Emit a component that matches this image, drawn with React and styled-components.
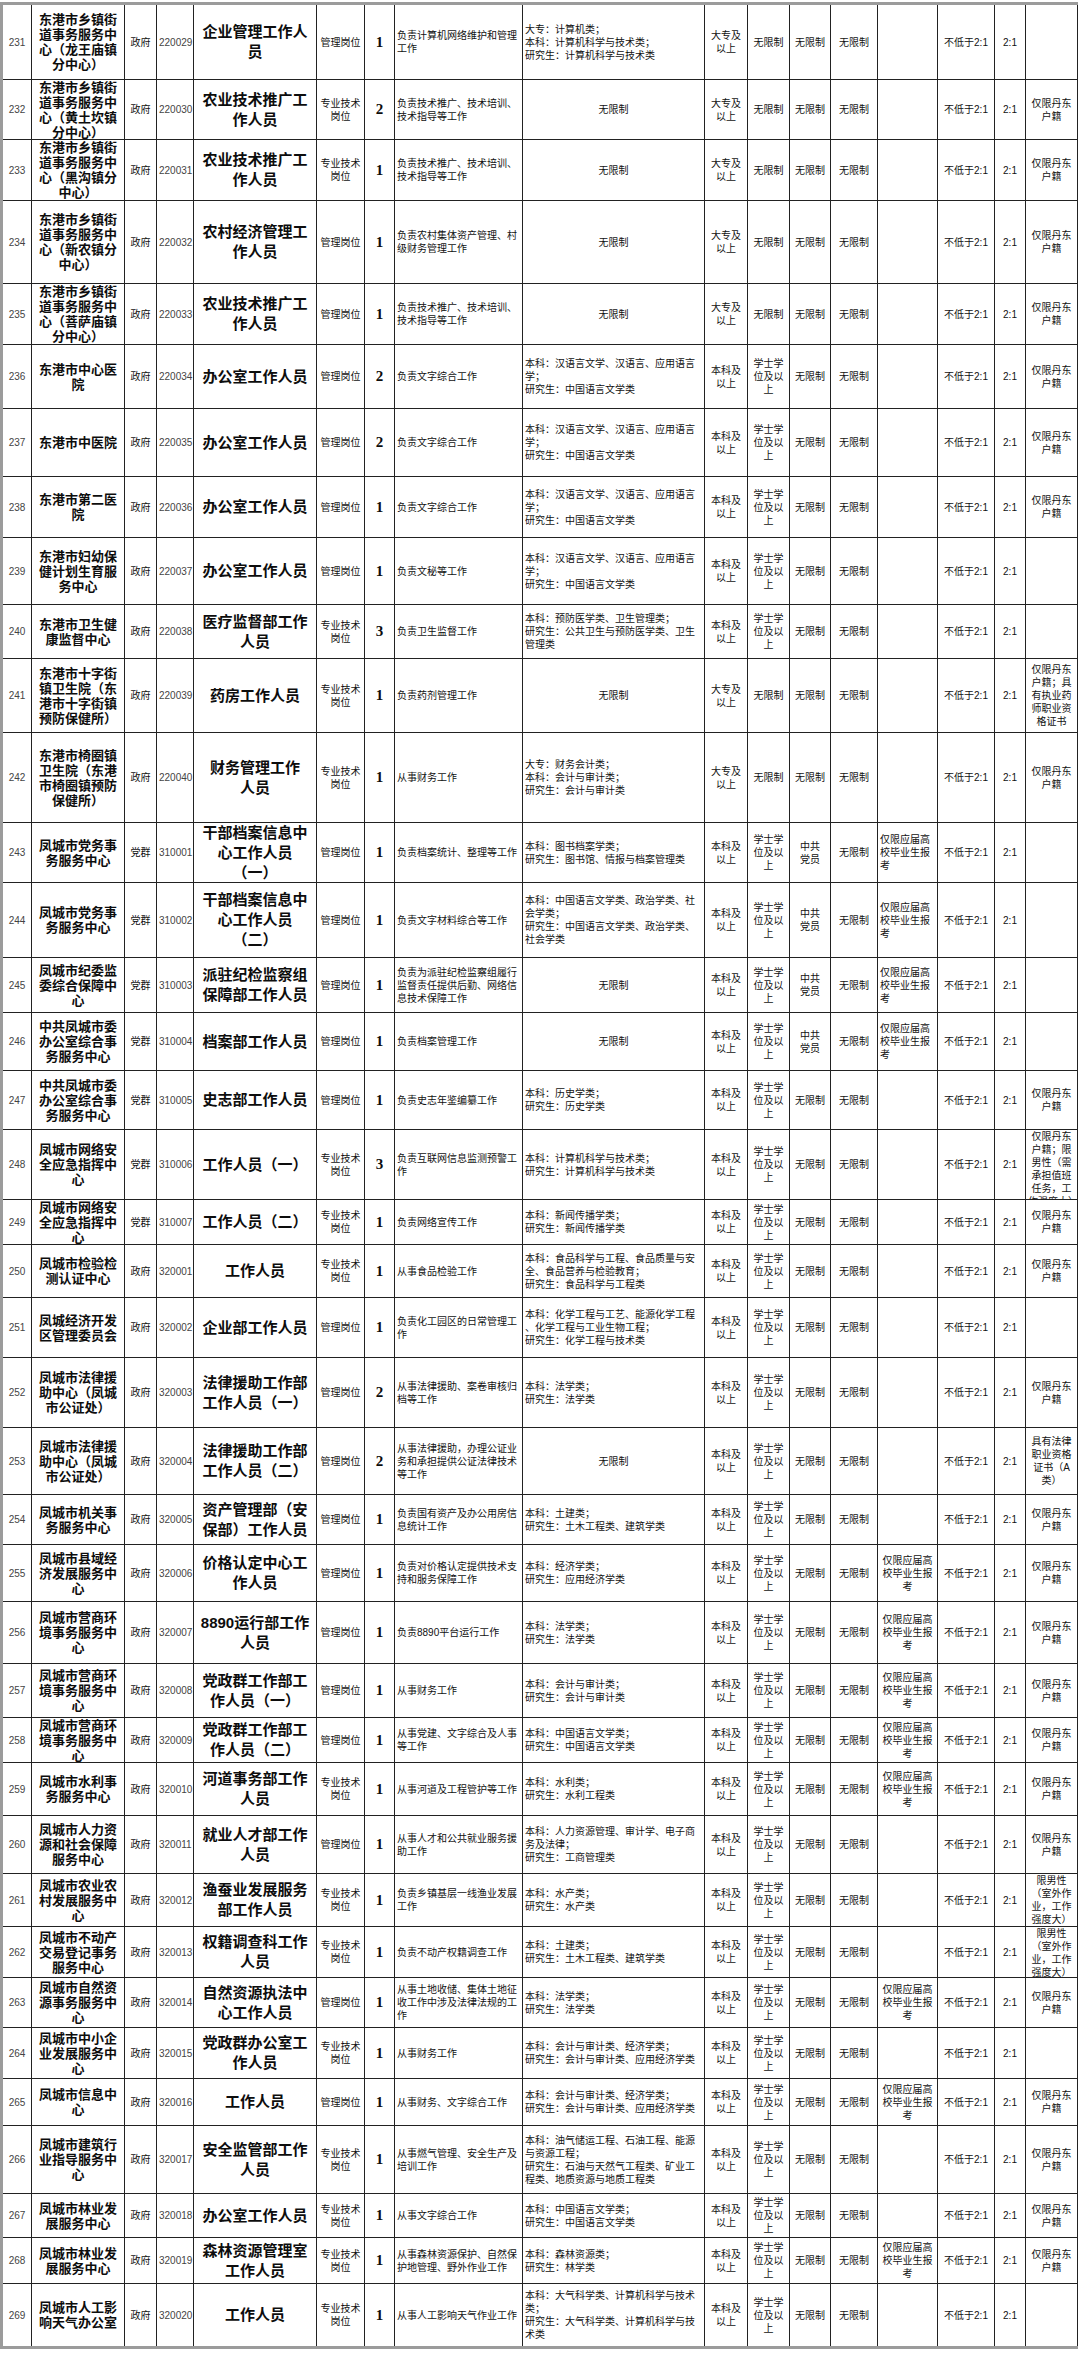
import React from 'react';
import styled, {createGlobalStyle} from 'styled-components';

// column widths incl. right border (px)
const COLS = [29, 93, 32, 37, 123, 48, 30, 128, 182, 43, 42, 41, 47, 60, 57, 31, 52];

const JK = ['仅限丹东', '户籍'];
const XS = ['学士学', '位及以', '上'];
const BK = ['本科及', '以上'];
const DZ = ['大专及', '以上'];
const GL = ['管理岗位'];
const ZJ = ['专业技术', '岗位'];
const YJ = ['仅限应届高', '校毕业生报', '考'];
const NO = ['无限制'];
const DY = ['中共', '党员'];

const dz = {edu: DZ, deg: NO};

const ROWS = [
  {n: 231, h: 75, ...dz, unit: ['东港市乡镇街', '道事务服务中', '心（龙王庙镇', '分中心）'], code: '220029', pos: ['企业管理工作人', '员'], duty: ['负责计算机网络维护和管理', '工作'], major: ['大专：计算机类；', '本科：计算机科学与技术类；', '研究生：计算机科学与技术类']},
  {n: 232, h: 60, ...dz, unit: ['东港市乡镇街', '道事务服务中', '心（黄土坎镇', '分中心）'], code: '220030', pos: ['农业技术推广工', '作人员'], type: ZJ, cnt: 2, duty: ['负责技术推广、技术培训、', '技术指导等工作'], remark: JK},
  {n: 233, h: 61, ...dz, unit: ['东港市乡镇街', '道事务服务中', '心（黑沟镇分', '中心）'], code: '220031', pos: ['农业技术推广工', '作人员'], type: ZJ, duty: ['负责技术推广、技术培训、', '技术指导等工作'], remark: JK},
  {n: 234, h: 83, ...dz, unit: ['东港市乡镇街', '道事务服务中', '心（新农镇分', '中心）'], code: '220032', pos: ['农村经济管理工', '作人员'], duty: ['负责农村集体资产管理、村', '级财务管理工作'], remark: JK},
  {n: 235, h: 61, ...dz, unit: ['东港市乡镇街', '道事务服务中', '心（菩萨庙镇', '分中心）'], code: '220033', pos: ['农业技术推广工', '作人员'], duty: ['负责技术推广、技术培训、', '技术指导等工作'], remark: JK},
  {n: 236, h: 64, unit: ['东港市中心医', '院'], code: '220034', pos: ['办公室工作人员'], cnt: 2, duty: ['负责文字综合工作'], major: ['本科：汉语言文学、汉语言、应用语言', '学；', '研究生：中国语言文学类'], remark: JK},
  {n: 237, h: 68, unit: ['东港市中医院'], code: '220035', pos: ['办公室工作人员'], cnt: 2, duty: ['负责文字综合工作'], major: ['本科：汉语言文学、汉语言、应用语言', '学；', '研究生：中国语言文学类'], remark: JK},
  {n: 238, h: 61, unit: ['东港市第二医', '院'], code: '220036', pos: ['办公室工作人员'], duty: ['负责文字综合工作'], major: ['本科：汉语言文学、汉语言、应用语言', '学；', '研究生：中国语言文学类'], remark: JK},
  {n: 239, h: 67, unit: ['东港市妇幼保', '健计划生育服', '务中心'], code: '220037', pos: ['办公室工作人员'], duty: ['负责文秘等工作'], major: ['本科：汉语言文学、汉语言、应用语言', '学；', '研究生：中国语言文学类']},
  {n: 240, h: 54, unit: ['东港市卫生健', '康监督中心'], code: '220038', pos: ['医疗监督部工作', '人员'], type: ZJ, cnt: 3, duty: ['负责卫生监督工作'], major: ['本科：预防医学类、卫生管理类；', '研究生：公共卫生与预防医学类、卫生', '管理类']},
  {n: 241, h: 74, ...dz, unit: ['东港市十字街', '镇卫生院（东', '港市十字街镇', '预防保健所）'], code: '220039', pos: ['药房工作人员'], type: ZJ, duty: ['负责药剂管理工作'], remark: ['仅限丹东', '户籍；具', '有执业药', '师职业资', '格证书']},
  {n: 242, h: 90, ...dz, unit: ['东港市椅圈镇', '卫生院（东港', '市椅圈镇预防', '保健所）'], code: '220040', pos: ['财务管理工作', '人员'], type: ZJ, duty: ['从事财务工作'], major: ['大专：财务会计类；', '本科：会计与审计类；', '研究生：会计与审计类'], remark: JK},
  {n: 243, h: 60, cat: '党群', pol: DY, c14: YJ, c14Left: true, unit: ['凤城市党务事', '务服务中心'], code: '310001', pos: ['干部档案信息中', '心工作人员', '（一）'], duty: ['负责档案统计、整理等工作'], major: ['本科：图书档案学类；', '研究生：图书馆、情报与档案管理类']},
  {n: 244, h: 75, cat: '党群', pol: DY, c14: YJ, c14Left: true, unit: ['凤城市党务事', '务服务中心'], code: '310002', pos: ['干部档案信息中', '心工作人员', '（二）'], duty: ['负责文字材料综合等工作'], major: ['本科：中国语言文学类、政治学类、社', '会学类；', '研究生：中国语言文学类、政治学类、', '社会学类']},
  {n: 245, h: 55, cat: '党群', pol: DY, c14: YJ, c14Left: true, unit: ['凤城市纪委监', '委综合保障中', '心'], code: '310003', pos: ['派驻纪检监察组', '保障部工作人员'], duty: ['负责为派驻纪检监察组履行', '监督责任提供后勤、网络信', '息技术保障工作']},
  {n: 246, h: 58, cat: '党群', pol: DY, c14: YJ, c14Left: true, unit: ['中共凤城市委', '办公室综合事', '务服务中心'], code: '310004', pos: ['档案部工作人员'], duty: ['负责档案管理工作']},
  {n: 247, h: 59, cat: '党群', unit: ['中共凤城市委', '办公室综合事', '务服务中心'], code: '310005', pos: ['史志部工作人员'], duty: ['负责史志年鉴编纂工作'], major: ['本科：历史学类；', '研究生：历史学类'], remark: JK},
  {n: 248, h: 70, cat: '党群', unit: ['凤城市网络安', '全应急指挥中', '心'], code: '310006', pos: ['工作人员（一）'], type: ZJ, cnt: 3, duty: ['负责互联网信息监测预警工', '作'], major: ['本科：计算机科学与技术类；', '研究生：计算机科学与技术类'], remark: ['仅限丹东', '户籍；限', '男性（需', '承担值班', '任务，工', '作强度大）']},
  {n: 249, h: 45, cat: '党群', unit: ['凤城市网络安', '全应急指挥中', '心'], code: '310007', pos: ['工作人员（二）'], type: ZJ, duty: ['负责网络宣传工作'], major: ['本科：新闻传播学类；', '研究生：新闻传播学类'], remark: JK},
  {n: 250, h: 53, unit: ['凤城市检验检', '测认证中心'], code: '320001', pos: ['工作人员'], type: ZJ, duty: ['从事食品检验工作'], major: ['本科：食品科学与工程、食品质量与安', '全、食品营养与检验教育；', '研究生：食品科学与工程类'], remark: JK},
  {n: 251, h: 60, unit: ['凤城经济开发', '区管理委员会'], code: '320002', pos: ['企业部工作人员'], duty: ['负责化工园区的日常管理工', '作'], major: ['本科：化学工程与工艺、能源化学工程', '、化学工程与工业生物工程；', '研究生：化学工程与技术类']},
  {n: 252, h: 70, unit: ['凤城市法律援', '助中心（凤城', '市公证处）'], code: '320003', pos: ['法律援助工作部', '工作人员（一）'], cnt: 2, duty: ['从事法律援助、案卷审核归', '档等工作'], major: ['本科：法学类；', '研究生：法学类'], remark: JK},
  {n: 253, h: 67, unit: ['凤城市法律援', '助中心（凤城', '市公证处）'], code: '320004', pos: ['法律援助工作部', '工作人员（二）'], cnt: 2, duty: ['从事法律援助，办理公证业', '务和承担提供公证法律技术', '等工作'], remark: ['具有法律', '职业资格', '证书（A', '类）']},
  {n: 254, h: 50, unit: ['凤城市机关事', '务服务中心'], code: '320005', pos: ['资产管理部（安', '保部）工作人员'], duty: ['负责国有资产及办公用房信', '息统计工作'], major: ['本科：土建类；', '研究生：土木工程类、建筑学类'], remark: JK},
  {n: 255, h: 57, c14: YJ, unit: ['凤城市县域经', '济发展服务中', '心'], code: '320006', pos: ['价格认定中心工', '作人员'], duty: ['负责对价格认定提供技术支', '持和服务保障工作'], major: ['本科：经济学类；', '研究生：应用经济学类'], remark: JK},
  {n: 256, h: 62, c14: YJ, unit: ['凤城市营商环', '境事务服务中', '心'], code: '320007', pos: ['8890运行部工作', '人员'], duty: ['负责8890平台运行工作'], major: ['本科：法学类；', '研究生：法学类'], remark: JK},
  {n: 257, h: 54, c14: YJ, unit: ['凤城市营商环', '境事务服务中', '心'], code: '320008', pos: ['党政群工作部工', '作人员（一）'], duty: ['从事财务工作'], major: ['本科：会计与审计类；', '研究生：会计与审计类'], remark: JK},
  {n: 258, h: 45, c14: YJ, unit: ['凤城市营商环', '境事务服务中', '心'], code: '320009', pos: ['党政群工作部工', '作人员（二）'], duty: ['从事党建、文字综合及人事', '等工作'], major: ['本科：中国语言文学类；', '研究生：中国语言文学类'], remark: JK},
  {n: 259, h: 53, c14: YJ, unit: ['凤城市水利事', '务服务中心'], code: '320010', pos: ['河道事务部工作', '人员'], type: ZJ, duty: ['从事河道及工程管护等工作'], major: ['本科：水利类；', '研究生：水利工程类'], remark: JK},
  {n: 260, h: 58, unit: ['凤城市人力资', '源和社会保障', '服务中心'], code: '320011', pos: ['就业人才部工作', '人员'], duty: ['从事人才和公共就业服务援', '助工作'], major: ['本科：人力资源管理、审计学、电子商', '务及法律；', '研究生：工商管理类'], remark: JK},
  {n: 261, h: 53, unit: ['凤城市农业农', '村发展服务中', '心'], code: '320012', pos: ['渔蚕业发展服务', '部工作人员'], type: ZJ, duty: ['负责乡镇基层一线渔业发展', '工作'], major: ['本科：水产类；', '研究生：水产类'], remark: ['限男性', '（室外作', '业，工作', '强度大）']},
  {n: 262, h: 51, unit: ['凤城市不动产', '交易登记事务', '服务中心'], code: '320013', pos: ['权籍调查科工作', '人员'], type: ZJ, duty: ['负责不动产权籍调查工作'], major: ['本科：土建类；', '研究生：土木工程类、建筑学类'], remark: ['限男性', '（室外作', '业，工作', '强度大）']},
  {n: 263, h: 50, c14: YJ, unit: ['凤城市自然资', '源事务服务中', '心'], code: '320014', pos: ['自然资源执法中', '心工作人员'], duty: ['从事土地收储、集体土地征', '收工作中涉及法律法规的工', '作'], major: ['本科：法学类；', '研究生：法学类'], remark: JK},
  {n: 264, h: 51, unit: ['凤城市中小企', '业发展服务中', '心'], code: '320015', pos: ['党政群办公室工', '作人员'], type: ZJ, duty: ['从事财务工作'], major: ['本科：会计与审计类、经济学类；', '研究生：会计与审计类、应用经济学类']},
  {n: 265, h: 47, c14: YJ, unit: ['凤城市信息中', '心'], code: '320016', pos: ['工作人员'], duty: ['从事财务、文字综合工作'], major: ['本科：会计与审计类、经济学类；', '研究生：会计与审计类、应用经济学类'], remark: JK},
  {n: 266, h: 68, unit: ['凤城市建筑行', '业指导服务中', '心'], code: '320017', pos: ['安全监管部工作', '人员'], type: ZJ, duty: ['从事燃气管理、安全生产及', '培训工作'], major: ['本科：油气储运工程、石油工程、能源', '与资源工程；', '研究生：石油与天然气工程类、矿业工', '程类、地质资源与地质工程类'], remark: JK},
  {n: 267, h: 44, unit: ['凤城市林业发', '展服务中心'], code: '320018', pos: ['办公室工作人员'], type: ZJ, duty: ['从事文字综合工作'], major: ['本科：中国语言文学类；', '研究生：中国语言文学类'], remark: JK},
  {n: 268, h: 46, c14: YJ, unit: ['凤城市林业发', '展服务中心'], code: '320019', pos: ['森林资源管理室', '工作人员'], type: ZJ, duty: ['从事森林资源保护、自然保', '护地管理、野外作业工作'], major: ['本科：森林资源类；', '研究生：林学类'], remark: JK},
  {n: 269, h: 62, unit: ['凤城市人工影', '响天气办公室'], code: '320020', pos: ['工作人员'], type: ZJ, duty: ['从事人工影响天气作业工作'], major: ['本科：大气科学类、计算机科学与技术', '类；', '研究生：大气科学类、计算机科学与技', '术类']},
];

const GlobalStyle = createGlobalStyle`
  html, body {
    margin: 0;
    padding: 0;
    background: #fff;
  }
  body {
    font-family: "Liberation Sans", "Noto Sans CJK SC", sans-serif;
    color: #111;
  }
`;

const Page = styled.div`
  width: 1080px;
  padding-top: 2px;
`;

const Table = styled.div`
  width: 1078px;
  box-sizing: border-box;
  border-top: 3px solid #9b9b9b;
  border-bottom: 3px solid #9b9b9b;
  border-left: 3px solid #9b9b9b;
`;

const Row = styled.div`
  display: grid;
  grid-template-columns: ${COLS.map((w) => w + 'px').join(' ')};
  height: ${(p) => p.$h}px;
  box-sizing: border-box;
  border-bottom: ${(p) => (p.$last ? 'none' : '1px solid #222')};
`;

const Cell = styled.div`
  display: flex;
  flex-direction: column;
  min-width: 0;
  overflow: hidden;
  box-sizing: border-box;
  border-right: 1px solid #222;
  padding: 0 2px;
`;

// auto margins keep overflowing text pinned to the top instead of centred
const Text = styled.div`
  margin: auto 0;
  text-align: ${(p) => p.$align || 'center'};
  font-family: "Liberation Sans", "Noto Sans CJK SC", sans-serif;
  font-size: 10px;
  line-height: 13px;
  white-space: nowrap;
`;

const NumText = styled(Text)`
  color: #444;
`;

const UnitText = styled(Text)`
  font-size: 13px;
  line-height: 15px;
  font-weight: 700;
  color: #0d0d0d;
`;

const PosText = styled(Text)`
  font-size: 15px;
  line-height: 20px;
  font-weight: 700;
  color: #0d0d0d;
`;

const CountText = styled(Text)`
  font-family: "Liberation Serif", serif;
  font-size: 15px;
  line-height: 17px;
  font-weight: 700;
  color: #0d0d0d;
`;

const Lines = ({items}) =>
  items.map((l, i) => (
    <React.Fragment key={i}>
      {i > 0 && <br />}
      {l}
    </React.Fragment>
  ));

const JobRow = ({r, last}) => {
  const {
    cat = '政府',
    type = GL,
    cnt = 1,
    edu = BK,
    deg = XS,
    pol = NO,
  } = r;
  return (
    <Row $h={r.h} $last={last}>
      <Cell><NumText>{r.n}</NumText></Cell>
      <Cell><UnitText><Lines items={r.unit} /></UnitText></Cell>
      <Cell><Text>{cat}</Text></Cell>
      <Cell><NumText>{r.code}</NumText></Cell>
      <Cell><PosText><Lines items={r.pos} /></PosText></Cell>
      <Cell><Text><Lines items={type} /></Text></Cell>
      <Cell><CountText>{cnt}</CountText></Cell>
      <Cell><Text $align="left"><Lines items={r.duty} /></Text></Cell>
      <Cell>
        {r.major ? (
          <Text $align="left"><Lines items={r.major} /></Text>
        ) : (
          <Text>无限制</Text>
        )}
      </Cell>
      <Cell><Text><Lines items={edu} /></Text></Cell>
      <Cell><Text><Lines items={deg} /></Text></Cell>
      <Cell><Text><Lines items={pol} /></Text></Cell>
      <Cell><Text>无限制</Text></Cell>
      <Cell>
        {r.c14 && <Text $align={r.c14Left ? 'left' : 'center'}><Lines items={r.c14} /></Text>}
      </Cell>
      <Cell><Text>不低于2:1</Text></Cell>
      <Cell><Text>2:1</Text></Cell>
      <Cell>{r.remark && <Text><Lines items={r.remark} /></Text>}</Cell>
    </Row>
  );
};

const App = () => {
  return (
    <Page>
      <GlobalStyle />
      <Table>
        {ROWS.map((r, i) => (
          <JobRow key={r.n} r={r} last={i === ROWS.length - 1} />
        ))}
      </Table>
    </Page>
  );
};

export default App;
